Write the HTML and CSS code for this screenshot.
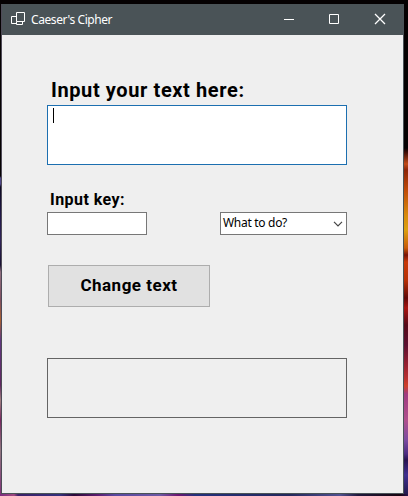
FILE: index.html
```html
<!DOCTYPE html>
<html lang="en">
<head>
<meta charset="utf-8">
<title>Caeser's Cipher</title>
<link rel="stylesheet" href="styles.css">
</head>
<body>
<div class="window">
  <header class="titlebar">
    <svg class="app-icon" width="16" height="16" viewBox="0 0 16 16"><path d="M6.5 1.5h8v9h-8zM6.5 5.500h-5v7h5M6.500 10.500v3h6v-3"/></svg>
    <span class="title">Caeser's Cipher</span>
    <nav class="controls">
      <svg width="46" height="30" viewBox="0 0 46 30"><path d="M19 14.500h10"/></svg>
      <svg width="46" height="30" viewBox="0 0 46 30"><path d="M18.500 9.500h9v9h-9z"/></svg>
      <svg class="close" width="46" height="30" viewBox="0 0 46 30"><path d="M18 9l10 10M28 9l-10 10"/></svg>
    </nav>
  </header>
  <main class="form">
    <label class="label label-large">Input your text here:</label>
    <div class="source"><span class="caret"></span></div>
    <div class="options">
      <div class="key">
        <label class="label label-small">Input key:</label>
        <div class="key-input"></div>
      </div>
      <div class="select"><span class="select-text">What to do?</span>
        <svg width="10" height="6" viewBox="0 0 10 6"><path d="M1 .8l4 4 4-4"/></svg>
      </div>
    </div>
    <button class="button">Change text</button>
    <div class="output"></div>
  </main>
</div>
</body>
</html>
```
FILE: styles.css
```css
* { box-sizing: border-box; }
html, body { height: 100%; }
body {
  margin: 0;
  padding: 4px 4px 2px 1px;
  overflow: hidden;
  background:
    linear-gradient(90deg, #7a2c80 0, #a04880 14px, #3c2068 18px, #34307c 60px, #2c0838 74px, #5c1c70 98px, #5848a0 115px, #6c58a4 160px, #6c1470 178px, #24307c 195px, #24285c 290px, #505090 340px, #20183c 358px, #180410 400px, #281450 408px) 0 100% / 100% 2px no-repeat,
    linear-gradient(#050102 0, #050102 148px, #3a0a05 152px, #c24a18 164px, #8c2408 170px, #c04a08 190px, #d88a0c 215px, #dca010 230px, #c85a08 248px, #7a1206 255px, #c83808 262px, #b83006 280px, #600808 298px, #a81410 308px, #560a18 325px, #5c1030 345px, #982030 365px, #b83030 378px, #d04028 386px, #a03c80 394px, #b0508c 420px, #7c4ca0 440px, #4c2c80 454px, #281450 460px, #403090 475px, #201848 496px) 100% 0 / 4px 100% no-repeat,
    linear-gradient(#050102 0, #050102 176px, #504888 178px, #504888 184px, #0c0820 187px, #201848 215px, #302458 240px, #181030 265px, #907080 272px, #805060 300px, #a86030 320px, #603880 340px, #602860 385px, #a08080 400px, #782860 420px, #907880 450px, #803078 496px);
}
.window {
  display: flex;
  flex-direction: column;
  height: 490px;
  border: 1px solid #4a5357;
  border-left-color: #4e4a57;
  background: #efefef;
}
.titlebar {
  display: flex;
  align-items: center;
  flex: none;
  height: 30px;
  padding-left: 8px;
  background: #4a5357;
  color: #fff;
}
.titlebar svg { fill: none; stroke: #fff; stroke-width: 1; }
.titlebar .close { stroke-width: 1.3; }
.app-icon { margin-top: -2px; }
.title {
  margin-left: 5px;
  font: 12px/16px "Noto Sans", sans-serif;
  letter-spacing: -.42px;
}
.controls { display: flex; margin-left: auto; }
.form {
  display: flex;
  flex-direction: column;
  align-items: flex-start;
  padding: 42px 0 0 45px;
}
.label { color: #000; font-family: Roboto, sans-serif; font-weight: 700; white-space: nowrap; }
.label-large { height: 28px; padding-left: 4px; font-size: 20px; line-height: 27px; letter-spacing: .6px; }
.source { width: 300px; height: 60px; padding: 2px 5px; border: 1px solid #1c6fb0; background: #fff; }
.caret { display: block; width: 1px; height: 15px; background: #000; }
.options { display: flex; justify-content: space-between; align-items: flex-end; width: 300px; height: 70px; }
.label-small { display: block; height: 23px; padding-left: 3px; font-size: 16px; line-height: 21px; letter-spacing: .45px; }
.key-input { width: 100px; height: 23px; border: 1px solid #777; background: #fff; }
.select {
  display: flex;
  align-items: center;
  justify-content: space-between;
  width: 127px;
  height: 23px;
  padding: 0 3px 1px 2px;
  border: 1px solid #777;
  background: #fff;
}
.select-text { color: #000; font: 12px/16px "Noto Sans", sans-serif; letter-spacing: -.3px; }
.select svg { margin-top: 1px; fill: none; stroke: #444; stroke-width: 1.2; }
.button {
  width: 162px;
  height: 42px;
  margin: 30px 0 0 1px;
  padding: 0 0 3px;
  border: 1px solid #adadad;
  background: #e1e1e1;
  color: #000;
  font: 700 17px/20px Roboto, sans-serif;
  letter-spacing: .5px;
}
.output { width: 300px; height: 60px; margin-top: 51px; border: 1px solid #646464; }
```
